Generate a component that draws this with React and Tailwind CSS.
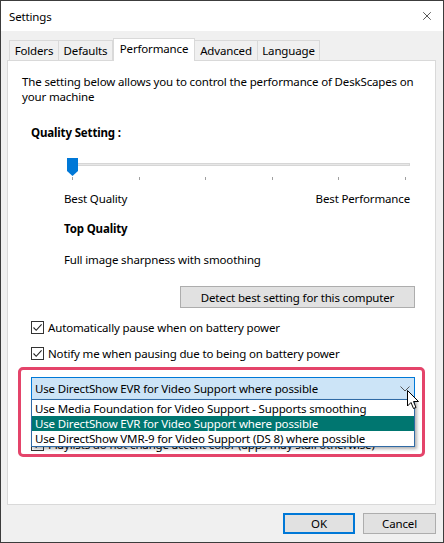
import { X } from 'lucide-react';

const tabs = [
  { label: 'Folders', w: 'w-[50px]' },
  { label: 'Defaults', w: 'w-[54px]' },
  { label: 'Performance', w: 'w-[82px]', active: true },
  { label: 'Advanced', w: 'w-[63px]' },
  { label: 'Language', w: 'w-[62px]' },
];

const options = [
  'Use Media Foundation for Video Support - Supports smoothing',
  'Use DirectShow EVR for Video Support where possible',
  'Use DirectShow VMR-9 for Video Support (DS 8) where possible',
];

function CheckBox({ checked = true }) {
  return (
    <span className="w-[13px] h-[13px] border border-[#333333] bg-white flex items-center justify-center shrink-0">
      {checked && (
        <svg width="11" height="11" viewBox="0 0 11 11">
          <path d="M1.5 5.5 L4.2 8.3 L9.6 2.4" fill="none" stroke="#222" strokeWidth="1.1" />
        </svg>
      )}
    </span>
  );
}

function CheckRow({ children, className = 'ml-[23px]' }) {
  return (
    <div className={`flex items-center gap-[4px] h-[15px] ${className}`}>
      <CheckBox />
      <span className="whitespace-nowrap">{children}</span>
    </div>
  );
}

export default function App() {
  return (
    <div className="w-[444px] h-[543px] border border-[#3c3c3c] bg-[#f0f0f0] flex flex-col font-['Noto_Sans',sans-serif] text-[11.5px] tracking-[-0.15px] leading-[15px] text-black overflow-hidden">
      {/* title bar */}
      <div className="h-[30px] bg-white flex items-center justify-between pl-[8px] pr-[9px] shrink-0">
        <span>Settings</span>
        <X size={14} strokeWidth={1.2} className="text-[#111]" />
      </div>

      <div className="flex-1 pl-[6px] pr-[7px]">
        {/* tabs */}
        <div className="mt-[7px] h-[22px] flex items-end pl-[2px] relative z-10">
          {tabs.map((t, i) =>
            t.active ? (
              <div key={i} className={`${t.w} h-[23px] -mb-px bg-white border border-b-0 border-[#d9d9d9] flex items-start justify-center pt-[2px]`}>
                {t.label}
              </div>
            ) : (
              <div key={i} className={`${t.w} h-[20px] bg-[#f0f0f0] border-t border-r border-[#d9d9d9] ${i === 0 ? 'border-l' : ''} flex items-center justify-center`}>
                {t.label}
              </div>
            )
          )}
        </div>

        {/* panel */}
        <div className="w-[429px] h-[445px] bg-white border border-[#d9d9d9] flex flex-col">
          <p className="mt-[13px] ml-[14px] w-[405px]">
            The setting below allows you to control the performance of DeskScapes on
            <br />
            your machine
          </p>
          <div className="mt-[21px] ml-[23px] font-bold">Quality Setting :</div>

          {/* slider */}
          <div className="mt-[16px] ml-[58px] w-[350px] h-[25px] relative">
            <div className="mt-[7px] ml-[6px] w-[338px] h-[3px] bg-[#e7e7e7] border border-[#d6d6d6]" />
            <div className="mt-[11px] ml-[6px] w-[334px] flex justify-between">
              {[0, 1, 2, 3, 4, 5].map((i) => (
                <span key={i} className="w-px h-[3px] bg-[#a0a0a0]" />
              ))}
            </div>
            <svg className="absolute left-[1px] top-[2px]" width="11" height="18" viewBox="0 0 11 18">
              <path d="M0 0 H11 V13 L5.5 18 L0 13 Z" fill="#0078d7" />
            </svg>
          </div>

          <div className="mt-[10px] ml-[56px] w-[346px] flex justify-between">
            <span>Best Quality</span>
            <span>Best Performance</span>
          </div>
          <div className="mt-[15px] ml-[56px] font-bold">Top Quality</div>
          <div className="mt-[16px] ml-[56px]">Full image sharpness with smoothing</div>

          <button className="mt-[19px] ml-[172px] w-[235px] h-[22px] bg-[#e1e1e1] border border-[#adadad] flex items-center justify-center">
            Detect best setting for this computer
          </button>

          <CheckRow className="mt-[12px] ml-[23px]">Automatically pause when on battery power</CheckRow>
          <CheckRow className="mt-[11px] ml-[23px]">Notify me when pausing due to being on battery power</CheckRow>

          {/* highlighted combo area */}
          <div className="mt-[6px] ml-[10px] w-[407px] h-[90px] border-[3px] border-[#e4446a] rounded-[5px] relative pt-[7px] pl-[10px]">
            <div className="w-[384px] h-[23px] bg-[#cce4f7] border border-[#0078d7] flex items-center justify-between pl-[3px] pr-[4px]">
              <span className="whitespace-nowrap">Use DirectShow EVR for Video Support where possible</span>
              <svg width="10" height="6" viewBox="0 0 10 6">
                <path d="M0.5 0.5 L5 5 L9.5 0.5" fill="none" stroke="#555" strokeWidth="1" />
              </svg>
            </div>

            <CheckRow className="mt-[37px]">Playlists do not change accent color (apps may stall otherwise)</CheckRow>

            {/* open dropdown list */}
            <div className="absolute left-[10px] top-[29px] w-[384px] h-[48px] bg-white border border-[#2f6aa5] shadow-[2px_2px_3px_rgba(0,0,0,0.3)] z-10 flex flex-col pt-px">
              {options.map((o, i) => (
                <div
                  key={i}
                  className={`h-[15px] pl-[3px] flex items-center whitespace-nowrap ${i === 1 ? 'bg-[#007670] text-white' : ''}`}
                >
                  {o}
                </div>
              ))}
            </div>

            {/* mouse cursor */}
            <svg className="absolute left-[386px] top-[20px] z-20" width="13" height="20" viewBox="0 0 13 20">
              <path d="M0.5 0.5 V16 L4 12.5 L6.5 18.5 L9 17.5 L6.5 11.5 H11.5 Z" fill="white" stroke="black" strokeWidth="1" strokeLinejoin="miter" />
            </svg>
          </div>
        </div>

        {/* buttons */}
        <div className="mt-[8px] flex justify-end gap-[8px]">
          <button className="w-[72px] h-[21px] bg-[#e1e1e1] border-2 border-[#0078d7] flex items-center justify-center">OK</button>
          <button className="w-[73px] h-[21px] bg-[#e1e1e1] border border-[#adadad] flex items-center justify-center">Cancel</button>
        </div>
      </div>
    </div>
  );
}
